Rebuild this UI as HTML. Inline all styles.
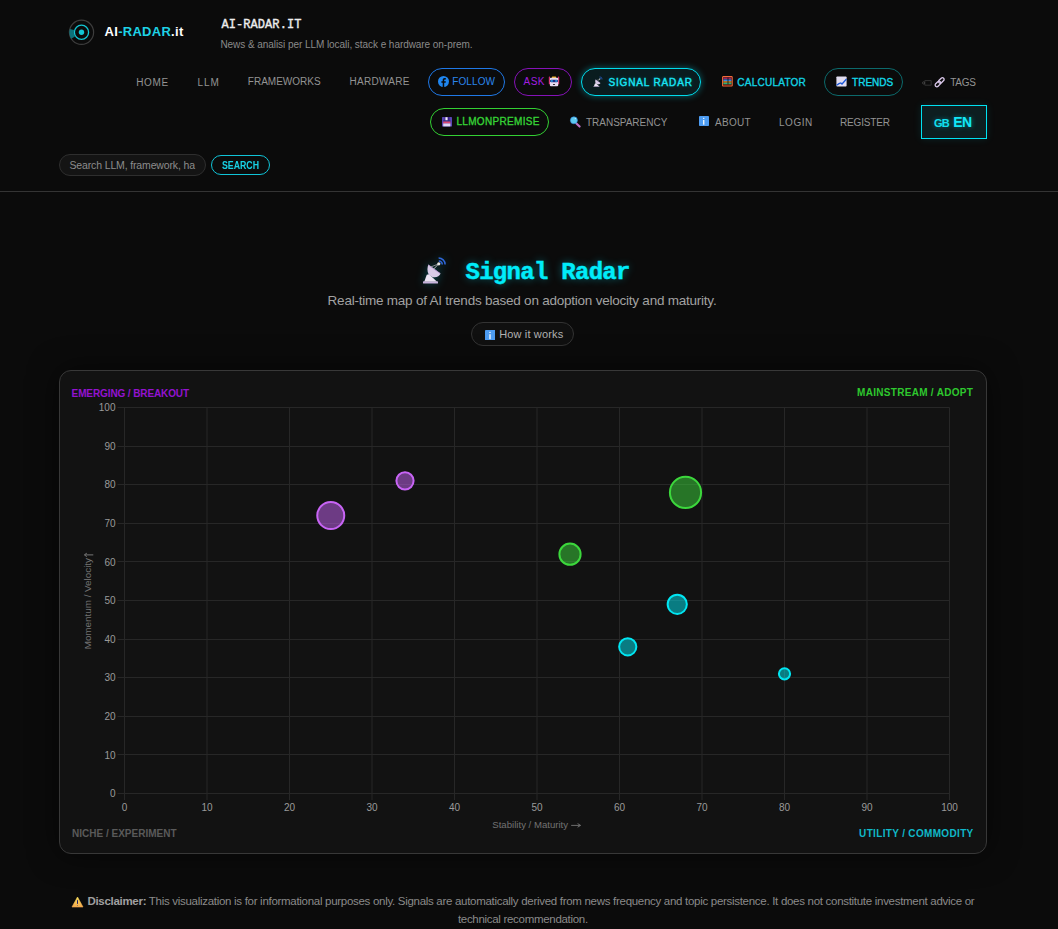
<!DOCTYPE html>
<html><head><meta charset="utf-8">
<style>
*{margin:0;padding:0;box-sizing:border-box}
html,body{width:1058px;height:929px;overflow:hidden;background:#0b0b0b;font-family:"Liberation Sans",sans-serif}
.a{position:absolute;white-space:nowrap;line-height:1}
.pill{position:absolute;border-radius:14px;border:1.3px solid}
</style></head><body>
<svg width="0" height="0" style="position:absolute">
<defs>
<symbol id="dish" viewBox="4 3 25 28">
  <rect x="5" y="28.2" width="15" height="2.3" rx="0.6" fill="#c6b2dc"/>
  <path d="M6.3 28.4 L8.8 21.8 L11 21.2 L18.8 28.4 Z" fill="#ece4f4"/>
  <path d="M10.4 11.6 L22.6 20.6 C21 25.2 13.6 25.6 10.6 21.2 C8.9 18.4 9.2 14.2 10.4 11.6 Z" fill="#d9cbe8"/>
  <path d="M10.6 12.2 L22.2 20.6" stroke="#a878cc" stroke-width="0.9" stroke-dasharray="1 0.6"/>
  <path d="M15.5 16.2 L20.8 10.8" stroke="#c8c8c8" stroke-width="0.9"/>
  <path d="M12.8 14 L20.8 10.8" stroke="#bdbdbd" stroke-width="0.7"/>
  <circle cx="20.8" cy="10.8" r="1.6" fill="#e6e6e6"/>
  <path d="M20.8 7.9 A3.5 3.5 0 0 1 24.3 11.4" stroke="#2f66d8" stroke-width="1.5" fill="none"/>
  <path d="M20.6 5 A6.5 6.5 0 0 1 27.1 11.5" stroke="#2f66d8" stroke-width="1.5" fill="none"/>
</symbol>
<symbol id="info" viewBox="0 0 10 10">
  <rect x="0" y="0" width="10" height="10" rx="0.8" fill="#4d9cf2"/>
  <rect x="4.1" y="1.7" width="1.3" height="1.2" rx="0.4" fill="#fff"/>
  <rect x="4.15" y="4" width="1.2" height="4.7" fill="#fff"/>
</symbol>
</defs></svg>

<!-- logo -->
<svg class="a deco" style="left:66px;top:17px" width="32" height="32" viewBox="0 0 32 32">
  <circle cx="15.5" cy="15.3" r="12.1" fill="none" stroke="#3d3d3d" stroke-width="1.2"/>
  <path d="M3.9 11.9 A12.1 12.1 0 0 0 5.3 21.8 L8.97 19.46 A7.75 7.75 0 0 1 8.07 13.1 Z" fill="#0d727a"/>
  <circle cx="15.5" cy="15.3" r="7.1" fill="#0b0b0b" stroke="#12c6d4" stroke-width="1.3"/>
  <circle cx="15.5" cy="15.3" r="2.7" fill="#12c6d4"/>
</svg>

<!-- FOLLOW -->
<div class="pill deco" style="left:428px;top:68px;width:77px;height:28px;border-color:#1f78e6"></div>
<svg class="a deco" style="left:438px;top:76px" width="11" height="11" viewBox="0 0 11 11"><circle cx="5.5" cy="5.5" r="5.5" fill="#1f86f0"/><path d="M6.2 11 V6.8 H7.6 L7.85 5.2 H6.2 V4.2 C6.2 3.8 6.4 3.5 7 3.5 H7.9 V2.2 C7.6 2.2 7.1 2.1 6.6 2.1 C5.5 2.1 4.7 2.8 4.7 4 V5.2 H3.4 V6.8 H4.7 V11 Z" fill="#0b0b0b"/></svg>

<!-- ASK -->
<div class="pill deco" style="left:514px;top:68px;width:58px;height:28px;border-color:#8512b8"></div>
<svg class="a deco" style="left:548px;top:76px" width="12" height="11" viewBox="0 0 12 11"><rect x="0.8" y="0.6" width="1.3" height="7.6" rx="0.5" fill="#d42c6c"/><rect x="9.9" y="0.6" width="1.3" height="7.6" rx="0.5" fill="#d42c6c"/><rect x="3.8" y="0.5" width="4.4" height="1.6" rx="0.7" fill="#f2b22a"/><rect x="1.9" y="1.8" width="8.3" height="8.4" rx="1" fill="#e8dcf2"/><rect x="2" y="3.7" width="8" height="2.5" rx="1.2" fill="#1c2a84"/><circle cx="3.9" cy="4.95" r="0.9" fill="#30b4f4"/><circle cx="8.1" cy="4.95" r="0.9" fill="#30b4f4"/><ellipse cx="6" cy="8.5" rx="1.1" ry="0.6" fill="#111"/></svg>

<!-- SIGNAL RADAR -->
<div class="pill deco" style="left:581px;top:68px;width:120px;height:28px;border-color:#00dcec;background:#0a1c1f;box-shadow:0 0 7px rgba(0,225,245,0.4)"></div>
<svg class="a deco" style="left:592.5px;top:75.8px" width="10" height="11"><use href="#dish"/></svg>

<!-- CALCULATOR -->
<svg class="a deco" style="left:721.5px;top:76.3px" width="11" height="11" viewBox="0 0 11 11"><rect x="0.6" y="0.6" width="9.6" height="9.4" rx="0.6" fill="#1a0c08" stroke="#f26a3a" stroke-width="1.1"/><rect x="1.3" y="1.6" width="8.1" height="1.5" fill="#9c2262"/><rect x="1.3" y="3.4" width="8.1" height="1.6" fill="#3c84e2"/><rect x="1.3" y="5.3" width="8.1" height="1.3" fill="#f2a434"/><rect x="1.3" y="6.8" width="8.1" height="1.6" fill="#2eb07a"/><rect x="5.6" y="1.5" width="0.8" height="7" fill="#111"/><rect x="1.6" y="8.7" width="7.4" height="0.8" fill="#b02414"/></svg>

<!-- TRENDS -->
<div class="pill deco" style="left:824px;top:68px;width:79px;height:28px;border-color:#0c6a6c"></div>
<svg class="a deco" style="left:835.5px;top:75.5px" width="11" height="11" viewBox="0 0 11 11"><rect x="0.4" y="0.5" width="10.2" height="10" rx="0.8" fill="#e2ddf0"/><path d="M0.5 9.2 L3 7.6 L4.8 7 L6 8 L10.5 3" stroke="#1a58d8" stroke-width="1.3" fill="none"/></svg>

<!-- TAGS -->
<svg class="a deco" style="left:921.5px;top:79.5px" width="10" height="6" viewBox="0 0 10 6"><path d="M2.8 0.6 H9.2 V5.2 H2.8 Z" fill="none" stroke="#3c3c3c" stroke-width="0.8"/><circle cx="1.6" cy="2.9" r="1.1" fill="none" stroke="#4a4a4a" stroke-width="0.8"/></svg>
<svg class="a deco" style="left:933.5px;top:75.5px" width="11.5" height="12" viewBox="0 0 11.5 12"><rect x="-3" y="-1.7" width="6.4" height="3.4" rx="1.7" transform="translate(3.8 8.1) rotate(-45)" fill="none" stroke="#dac8ea" stroke-width="1.3"/><rect x="-3.4" y="-1.7" width="6.4" height="3.4" rx="1.7" transform="translate(7.5 4.3) rotate(-45)" fill="none" stroke="#dac8ea" stroke-width="1.3"/></svg>

<!-- LLMONPREMISE -->
<div class="pill deco" style="left:430px;top:108px;width:119px;height:28px;border-color:#33d033"></div>
<svg class="a deco" style="left:442px;top:116.6px" width="10" height="10" viewBox="0 0 10 10"><rect x="0" y="0" width="10" height="9.5" rx="0.6" fill="#5a46b4"/><rect x="2.6" y="0" width="5" height="3.5" fill="#3a1f86"/><rect x="3.4" y="0.2" width="2.2" height="3.2" fill="#f4eef8"/><rect x="1.2" y="3.6" width="7.2" height="0.9" fill="#102060"/><rect x="1.2" y="4.5" width="7.2" height="2" fill="#e04872"/><rect x="1.2" y="6.5" width="7.2" height="2.9" fill="#e0d8f4"/></svg>

<!-- TRANSPARENCY -->
<svg class="a deco" style="left:569px;top:116px" width="12" height="12" viewBox="0 0 12 12"><path d="M7.4 7.4 L10.6 10.6" stroke="#c072c4" stroke-width="2.1" stroke-linecap="round"/><circle cx="4.9" cy="4.3" r="3.5" fill="#5ccaf0" stroke="#3a8ee0" stroke-width="0.6"/><circle cx="6.3" cy="2.6" r="0.6" fill="#d8f4ff"/></svg>

<!-- ABOUT -->
<svg class="a deco" style="left:699px;top:116px" width="10" height="10"><use href="#info"/></svg>

<!-- EN -->
<div class="a deco" style="left:921px;top:105px;width:66px;height:34px;border:1.4px solid #00e2f2;background:#0d1e20;box-shadow:0 0 8px rgba(0,220,240,0.12)"></div>

<!-- search -->
<div class="a deco" style="left:59px;top:154px;width:147px;height:22px;border:1px solid #2e2e2e;border-radius:11px;background:#141414"></div>
<div class="a deco" style="left:211px;top:155px;width:59px;height:20px;border:1.3px solid #10c4d8;border-radius:10px"></div>

<div class="a deco" style="left:0;top:191px;width:1058px;height:1px;background:#343434"></div>

<!-- hero -->
<svg class="a deco" style="left:418px;top:252.5px;filter:drop-shadow(0 0 5px rgba(0,220,255,0.3))" width="32" height="34" viewBox="0 0 32 34"><g transform="translate(0 0)"><use href="#dish" x="4" y="3" width="25" height="28"/></g></svg>
<div class="a deco" style="left:471px;top:322px;width:103px;height:24px;border:1px solid #333;border-radius:12px;background:#101010"></div>
<svg class="a deco" style="left:484.5px;top:329.5px" width="10.5" height="10.5" viewBox="0 0 10 10"><use href="#info"/></svg>

<!-- card -->
<div class="a deco" style="left:59px;top:370px;width:928px;height:484px;border:1px solid #383838;border-radius:12px;background:#121212;box-shadow:0 0 30px rgba(0,0,0,0.55)"></div>
<div class="deco">
<svg class="a" style="left:0;top:0" width="1058" height="929" viewBox="0 0 1058 929" id="chart"><style>.tk{font:10px "Liberation Sans",sans-serif;fill:#9a9a9a}.tt{font:9.5px "Liberation Sans",sans-serif;fill:#727272}</style><line x1="124.5" y1="407.5" x2="124.5" y2="800.0" stroke="#272727" stroke-width="1"/><line x1="117.5" y1="793.5" x2="949.5" y2="793.5" stroke="#272727" stroke-width="1"/><line x1="207.0" y1="407.5" x2="207.0" y2="800.0" stroke="#272727" stroke-width="1"/><line x1="117.5" y1="754.5" x2="949.5" y2="754.5" stroke="#272727" stroke-width="1"/><line x1="289.5" y1="407.5" x2="289.5" y2="800.0" stroke="#272727" stroke-width="1"/><line x1="117.5" y1="716.5" x2="949.5" y2="716.5" stroke="#272727" stroke-width="1"/><line x1="372.0" y1="407.5" x2="372.0" y2="800.0" stroke="#272727" stroke-width="1"/><line x1="117.5" y1="677.5" x2="949.5" y2="677.5" stroke="#272727" stroke-width="1"/><line x1="454.5" y1="407.5" x2="454.5" y2="800.0" stroke="#272727" stroke-width="1"/><line x1="117.5" y1="639.5" x2="949.5" y2="639.5" stroke="#272727" stroke-width="1"/><line x1="537.0" y1="407.5" x2="537.0" y2="800.0" stroke="#272727" stroke-width="1"/><line x1="117.5" y1="600.5" x2="949.5" y2="600.5" stroke="#272727" stroke-width="1"/><line x1="619.5" y1="407.5" x2="619.5" y2="800.0" stroke="#272727" stroke-width="1"/><line x1="117.5" y1="561.5" x2="949.5" y2="561.5" stroke="#272727" stroke-width="1"/><line x1="702.0" y1="407.5" x2="702.0" y2="800.0" stroke="#272727" stroke-width="1"/><line x1="117.5" y1="523.5" x2="949.5" y2="523.5" stroke="#272727" stroke-width="1"/><line x1="784.5" y1="407.5" x2="784.5" y2="800.0" stroke="#272727" stroke-width="1"/><line x1="117.5" y1="484.5" x2="949.5" y2="484.5" stroke="#272727" stroke-width="1"/><line x1="867.0" y1="407.5" x2="867.0" y2="800.0" stroke="#272727" stroke-width="1"/><line x1="117.5" y1="446.5" x2="949.5" y2="446.5" stroke="#272727" stroke-width="1"/><line x1="949.5" y1="407.5" x2="949.5" y2="800.0" stroke="#272727" stroke-width="1"/><line x1="117.5" y1="407.5" x2="949.5" y2="407.5" stroke="#272727" stroke-width="1"/><text x="115.5" y="797.10" text-anchor="end" class="tk">0</text><text x="124.5" y="811.30" text-anchor="middle" class="tk">0</text><text x="115.5" y="758.50" text-anchor="end" class="tk">10</text><text x="207.0" y="811.30" text-anchor="middle" class="tk">10</text><text x="115.5" y="719.90" text-anchor="end" class="tk">20</text><text x="289.5" y="811.30" text-anchor="middle" class="tk">20</text><text x="115.5" y="681.30" text-anchor="end" class="tk">30</text><text x="372.0" y="811.30" text-anchor="middle" class="tk">30</text><text x="115.5" y="642.70" text-anchor="end" class="tk">40</text><text x="454.5" y="811.30" text-anchor="middle" class="tk">40</text><text x="115.5" y="604.10" text-anchor="end" class="tk">50</text><text x="537.0" y="811.30" text-anchor="middle" class="tk">50</text><text x="115.5" y="565.50" text-anchor="end" class="tk">60</text><text x="619.5" y="811.30" text-anchor="middle" class="tk">60</text><text x="115.5" y="526.90" text-anchor="end" class="tk">70</text><text x="702.0" y="811.30" text-anchor="middle" class="tk">70</text><text x="115.5" y="488.30" text-anchor="end" class="tk">80</text><text x="784.5" y="811.30" text-anchor="middle" class="tk">80</text><text x="115.5" y="449.70" text-anchor="end" class="tk">90</text><text x="867.0" y="811.30" text-anchor="middle" class="tk">90</text><text x="115.5" y="411.10" text-anchor="end" class="tk">100</text><text x="949.5" y="811.30" text-anchor="middle" class="tk">100</text><text x="492.3" y="827.8" textLength="75.8" lengthAdjust="spacingAndGlyphs" class="tt">Stability / Maturity</text><path d="M571.2 825.4 H580.2 M577.6 823.6 L580.6 825.4 L577.6 827.2" stroke="#777" stroke-width="0.9" fill="none"/><text transform="translate(91.1 649.3) rotate(-90)" textLength="91.3" lengthAdjust="spacingAndGlyphs" class="tt">Momentum / Velocity</text><path d="M93.3 554.9 H85.2 M86.8 553.2 L84.3 554.9 L86.8 556.6" stroke="#777" stroke-width="1" fill="none"/><circle cx="330.75" cy="515.58" r="13.5" fill="rgba(200,100,245,0.5)" stroke="rgb(200,100,245)" stroke-width="2"/><circle cx="405.00" cy="480.84" r="8.6" fill="rgba(200,100,245,0.5)" stroke="rgb(200,100,245)" stroke-width="2"/><circle cx="570.00" cy="554.18" r="10.6" fill="rgba(60,215,60,0.5)" stroke="rgb(60,215,60)" stroke-width="2"/><circle cx="685.50" cy="492.42" r="15.6" fill="rgba(60,215,60,0.5)" stroke="rgb(60,215,60)" stroke-width="2"/><circle cx="677.25" cy="604.36" r="9.6" fill="rgba(0,230,242,0.5)" stroke="rgb(0,230,242)" stroke-width="2"/><circle cx="627.75" cy="646.82" r="8.6" fill="rgba(0,230,242,0.5)" stroke="rgb(0,230,242)" stroke-width="2"/><circle cx="784.50" cy="673.84" r="5.6" fill="rgba(0,230,242,0.5)" stroke="rgb(0,230,242)" stroke-width="2"/></svg>
</div>

<div class="a" id="logo_txt" style="left:104.60px;top:25.40px;font-size:13px;font-weight:bold;color:#fff;font-family:'Liberation Sans',sans-serif;letter-spacing:0.280px;">AI<span style="color:#1ed3e6">-RADAR</span>.it</div>
<div class="a" id="mono" style="left:221.40px;top:19.20px;font-size:12px;font-weight:normal;color:#ececec;font-family:'Liberation Mono',monospace;letter-spacing:0.080px;-webkit-text-stroke:0.35px #f0f0f0">AI-RADAR.IT</div>
<div class="a" id="sub" style="left:220.40px;top:40.40px;font-size:10px;font-weight:normal;color:#8a8a8a;font-family:'Liberation Sans',sans-serif;letter-spacing:-0.055px;">News &amp; analisi per LLM locali, stack e hardware on-prem.</div>
<div class="a" id="HOME" style="left:136.30px;top:77.70px;font-size:10px;font-weight:normal;color:#939393;font-family:'Liberation Sans',sans-serif;letter-spacing:0.600px;">HOME</div>
<div class="a" id="LLM" style="left:197.60px;top:77.70px;font-size:10px;font-weight:normal;color:#939393;font-family:'Liberation Sans',sans-serif;letter-spacing:0.900px;">LLM</div>
<div class="a" id="FRAMEW" style="left:247.80px;top:77.40px;font-size:10px;font-weight:normal;color:#939393;font-family:'Liberation Sans',sans-serif;letter-spacing:-0.000px;">FRAMEWORKS</div>
<div class="a" id="HARDW" style="left:349.60px;top:77.40px;font-size:10px;font-weight:normal;color:#939393;font-family:'Liberation Sans',sans-serif;letter-spacing:0.258px;">HARDWARE</div>
<div class="a" id="FOLLOW" style="left:452.20px;top:77.20px;font-size:10px;font-weight:normal;color:#2a86ec;font-family:'Liberation Sans',sans-serif;letter-spacing:0.120px;">FOLLOW</div>
<div class="a" id="ASK" style="left:523.60px;top:77.20px;font-size:10px;font-weight:normal;color:#a21ee0;font-family:'Liberation Sans',sans-serif;letter-spacing:0.400px;">ASK</div>
<div class="a" id="SIGNAL" style="left:608.40px;top:78.00px;font-size:10px;font-weight:normal;color:#18e4f4;font-family:'Liberation Sans',sans-serif;letter-spacing:0.854px;-webkit-text-stroke:0.4px #18e4f4;text-shadow:0 0 4px rgba(0,230,255,0.3)">SIGNAL RADAR</div>
<div class="a" id="CALC" style="left:737.30px;top:78.00px;font-size:10px;font-weight:normal;color:#12d2e2;font-family:'Liberation Sans',sans-serif;letter-spacing:0.246px;-webkit-text-stroke:0.35px #12d2e2">CALCULATOR</div>
<div class="a" id="TRENDS" style="left:852.10px;top:78.00px;font-size:10px;font-weight:normal;color:#12d8e8;font-family:'Liberation Sans',sans-serif;letter-spacing:0.000px;-webkit-text-stroke:0.35px #12d8e8">TRENDS</div>
<div class="a" id="TAGS" style="left:950.20px;top:77.60px;font-size:10px;font-weight:normal;color:#939393;font-family:'Liberation Sans',sans-serif;letter-spacing:-0.267px;">TAGS</div>
<div class="a" id="LLMONP" style="left:456.40px;top:117.10px;font-size:10px;font-weight:normal;color:#36d236;font-family:'Liberation Sans',sans-serif;letter-spacing:0.334px;-webkit-text-stroke:0.35px #36d236">LLMONPREMISE</div>
<div class="a" id="TRANSP" style="left:586.00px;top:117.60px;font-size:10px;font-weight:normal;color:#939393;font-family:'Liberation Sans',sans-serif;letter-spacing:-0.017px;">TRANSPARENCY</div>
<div class="a" id="ABOUT" style="left:715.00px;top:117.60px;font-size:10px;font-weight:normal;color:#939393;font-family:'Liberation Sans',sans-serif;letter-spacing:0.300px;">ABOUT</div>
<div class="a" id="LOGIN" style="left:779.00px;top:117.60px;font-size:10px;font-weight:normal;color:#939393;font-family:'Liberation Sans',sans-serif;letter-spacing:0.550px;">LOGIN</div>
<div class="a" id="REGIS" style="left:840.00px;top:117.60px;font-size:10px;font-weight:normal;color:#939393;font-family:'Liberation Sans',sans-serif;letter-spacing:-0.171px;">REGISTER</div>
<div class="a" id="GB" style="left:934.00px;top:118.20px;font-size:11px;font-weight:bold;color:#12e0f0;font-family:'Liberation Sans',sans-serif;letter-spacing:-0.900px;text-shadow:0 0 5px rgba(0,230,255,0.45)">GB</div>
<div class="a" id="EN" style="left:953.20px;top:115.40px;font-size:14px;font-weight:bold;color:#12e8f8;font-family:'Liberation Sans',sans-serif;letter-spacing:-0.600px;text-shadow:0 0 5px rgba(0,230,255,0.45)">EN</div>
<div class="a" id="placeh" style="left:69.50px;top:159.50px;font-size:10.5px;font-weight:normal;color:#8c8c8c;font-family:'Liberation Sans',sans-serif;letter-spacing:-0.142px;">Search LLM, framework, ha</div>
<div class="a" id="SEARCH" style="left:221.70px;top:160.90px;font-size:10px;font-weight:bold;color:#18d0e4;font-family:'Liberation Sans',sans-serif;letter-spacing:-0.040px;transform:scaleX(0.88);transform-origin:0 0">SEARCH</div>
<div class="a" id="heading" style="left:465.50px;top:260.70px;font-size:24px;font-weight:bold;color:#00ecfa;font-family:'Liberation Mono',monospace;letter-spacing:-0.719px;-webkit-text-stroke:0.45px #00ecfa;text-shadow:0 0 9px rgba(0,230,255,0.45)">Signal Radar</div>
<div class="a" id="hero_sub" style="left:327.60px;top:294.20px;font-size:13.5px;font-weight:normal;color:#a2a2a2;font-family:'Liberation Sans',sans-serif;letter-spacing:-0.230px;">Real-time map of AI trends based on adoption velocity and maturity.</div>
<div class="a" id="howit" style="left:499.20px;top:328.60px;font-size:11px;font-weight:normal;color:#b0b0b0;font-family:'Liberation Sans',sans-serif;letter-spacing:0.147px;">How it works</div>
<div class="a" id="EMERG" style="left:71.60px;top:388.60px;font-size:10px;font-weight:bold;color:#9412d0;font-family:'Liberation Sans',sans-serif;letter-spacing:-0.111px;">EMERGING / BREAKOUT</div>
<div class="a" id="MAINS" style="left:857.10px;top:388.10px;font-size:10px;font-weight:bold;color:#2ec82e;font-family:'Liberation Sans',sans-serif;letter-spacing:0.293px;">MAINSTREAM / ADOPT</div>
<div class="a" id="NICHE" style="left:72.10px;top:828.60px;font-size:10px;font-weight:bold;color:#5a5a5a;font-family:'Liberation Sans',sans-serif;letter-spacing:-0.003px;">NICHE / EXPERIMENT</div>
<div class="a" id="UTIL" style="left:859.10px;top:828.60px;font-size:10px;font-weight:bold;color:#10b8c8;font-family:'Liberation Sans',sans-serif;letter-spacing:0.334px;">UTILITY / COMMODITY</div>
<div class="a" id="disc1" style="left:87.40px;top:896.00px;font-size:11.5px;font-weight:normal;color:#8a8a8a;font-family:'Liberation Sans',sans-serif;letter-spacing:-0.293px;"><b style="color:#a0a0a0">Disclaimer:</b> This visualization is for informational purposes only. Signals are automatically derived from news frequency and topic persistence. It does not constitute investment advice or</div>
<div class="a" id="disc2" style="left:457.90px;top:913.70px;font-size:11.5px;font-weight:normal;color:#8a8a8a;font-family:'Liberation Sans',sans-serif;letter-spacing:-0.301px;">technical recommendation.</div>

<svg class="a deco" style="left:71px;top:896px" width="13" height="12" viewBox="0 0 13 12"><defs><linearGradient id="wg" x1="0" y1="0" x2="0" y2="1"><stop offset="0" stop-color="#fbe05a"/><stop offset="1" stop-color="#f2a84e"/></linearGradient></defs><path d="M6.5 1 L12 11 H1 Z" fill="url(#wg)" stroke="url(#wg)" stroke-width="0.6" stroke-linejoin="round"/><rect x="6.05" y="3.8" width="0.95" height="4.2" rx="0.4" fill="#12126a"/><rect x="6.05" y="9" width="0.95" height="0.9" fill="#8a7a5a"/></svg>
</body></html>
